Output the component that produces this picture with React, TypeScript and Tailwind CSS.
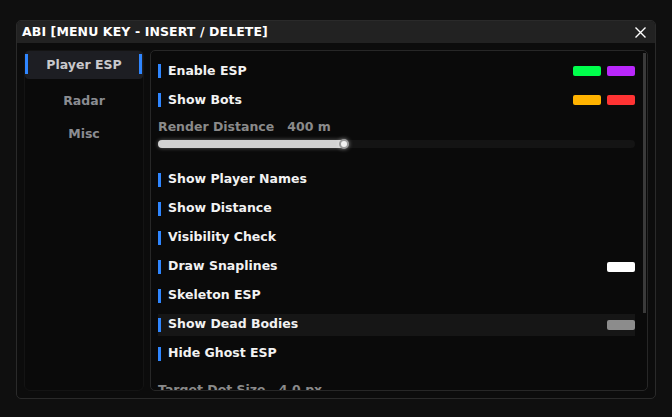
const FONT = { fontFamily: '"DejaVu Sans", Verdana, sans-serif' }

type Row = { label: string; swatches?: string[]; active?: boolean }

const topRows: Row[] = [
  { label: "Enable ESP", swatches: ["bg-[#00ff4c]", "bg-[#b927fb]"] },
  { label: "Show Bots", swatches: ["bg-[#ffb300]", "bg-[#ff3333]"] },
]

const rows: Row[] = [
  { label: "Show Player Names" },
  { label: "Show Distance" },
  { label: "Visibility Check" },
  { label: "Draw Snaplines", swatches: ["bg-white"] },
  { label: "Skeleton ESP" },
  { label: "Show Dead Bodies", swatches: ["bg-[#8c8c8c]"], active: true },
  { label: "Hide Ghost ESP" },
]

const ToggleRow = ({ row }: { row: Row }) => (
  <div
    className={`flex h-[22px] items-center mb-[7px] ${row.active ? "bg-[#161616]" : ""}`}
  >
    <div className="w-[3px] h-[14px] bg-[#2f86ff]" />
    <span className="ml-[7px] flex-1 text-[12.5px] font-bold text-[#f2f2f2]">{row.label}</span>
    <div className="flex gap-[6px]">
      {row.swatches?.map((c, i) => (
        <div key={i} className={`w-[28px] h-[10px] rounded-[2px] ${c}`} />
      ))}
    </div>
  </div>
)

const Tabs = () => (
  <div className="w-[120px] shrink-0 flex flex-col rounded-md bg-[#0a0a0a] border border-[#141414]">
    <div className="relative h-[28px] flex items-center justify-center rounded-[4px] bg-[#1d1e23]">
      <div className="absolute left-0 top-[3px] w-[3px] h-[20px] bg-[#2f86ff]" />
      <div className="absolute right-[1px] top-[3px] w-[3px] h-[20px] bg-[#2f86ff]" />
      <span className="text-[12.5px] font-bold text-[#c9c9cc]">Player ESP</span>
    </div>
    <div className="h-[28px] mt-[8px] flex items-center justify-center text-[12.5px] font-bold text-[#8a8c92]">
      Radar
    </div>
    <div className="h-[28px] mt-[5px] flex items-center justify-center text-[12.5px] font-bold text-[#8a8c92]">
      Misc
    </div>
  </div>
)

export default function App() {
  return (
    <div className="w-[672px] h-[417px] bg-[#0f0f0f] pt-[20px] pl-[16px]" style={FONT}>
      <div className="w-[640px] h-[379px] flex flex-col rounded-[5px] border border-[#2a2a2a] bg-[#0c0c0c] overflow-hidden">
        {/* Title bar */}
        <div className="h-[22px] shrink-0 flex items-center justify-between bg-[#222222] pl-[5px] pr-[9px]">
          <span className="text-[12.5px] font-bold text-white tracking-[0.1px]">
            ABI [MENU KEY - INSERT / DELETE]
          </span>
          <svg width="11" height="11" viewBox="0 0 11 11" className="mt-[1px]">
            <path d="M0.5 0.5 L10.5 10.5 M10.5 0.5 L0.5 10.5" stroke="white" strokeWidth="1.4" />
          </svg>
        </div>

        {/* Body */}
        <div className="flex flex-1 gap-[6px] pt-[7px] pb-[7px] pl-[7px] pr-[7px] min-h-0">
          <Tabs />

          <div className="relative flex-1 rounded-[5px] border border-[#272727] bg-[#0a0a0a] overflow-hidden">
            <div className="absolute right-[1px] top-[2px] w-[3px] h-[260px] bg-[#3a3a3a]" />
            <div className="pl-[7px] pr-[12px] pt-[9px]">
              {topRows.map((r) => (
                <ToggleRow key={r.label} row={r} />
              ))}

              {/* Render distance slider */}
              <div className="mt-[3px] text-[12.5px] font-bold text-[#8a8a8a]">
                Render Distance&nbsp;&nbsp;&nbsp;400 m
              </div>
              <div className="relative mt-[3px] h-[8px] rounded-full bg-[#141414]">
                <div className="h-[8px] w-[187px] rounded-full bg-[#d2d2d2] shadow-[0_0_4px_rgba(255,255,255,0.35)]" />
                <div className="absolute left-[181px] top-[-1px] w-[10px] h-[10px] rounded-full bg-[#f2f2f2] border-2 border-[#9a9a9a] shadow-[0_0_4px_rgba(255,255,255,0.5)]" />
              </div>

              <div className="mt-[21px]">
                {rows.map((r) => (
                  <ToggleRow key={r.label} row={r} />
                ))}
              </div>

              <div className="mt-[16px] text-[12.5px] font-bold text-[#8a8a8a]">
                Target Dot Size&nbsp;&nbsp;&nbsp;4.0 px
              </div>
            </div>
          </div>
        </div>
      </div>
    </div>
  )
}
